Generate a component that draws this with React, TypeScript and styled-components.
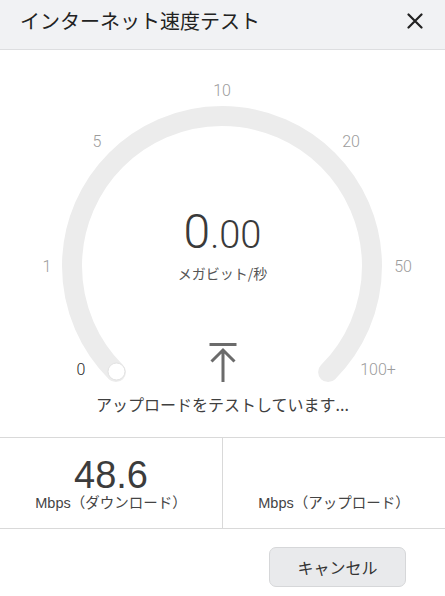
import styled, { createGlobalStyle } from "styled-components";

const GlobalStyle = createGlobalStyle`
  html, body {
    margin: 0;
    padding: 0;
    background: #ffffff;
  }
  body {
    font-family: "Liberation Sans", "Noto Sans CJK JP", sans-serif;
    color: #333333;
  }
`;

const Page = styled.div`
  width: 445px;
  height: 596px;
  display: flex;
  flex-direction: column;
  background: #ffffff;
  overflow: hidden;
`;

const Header = styled.header`
  height: 50px;
  box-sizing: border-box;
  display: flex;
  align-items: center;
  justify-content: space-between;
  padding: 0 20px 8px 20px;
  background: #f1f2f4;
  border-bottom: 1px solid #dddee0;
  flex-shrink: 0;
`;

const Title = styled.h1`
  margin: 0;
  font-family: "Noto Sans CJK JP", sans-serif;
  font-size: 20px;
  font-weight: 400;
  line-height: 24px;
  color: #222222;
`;

const CloseButton = styled.button`
  width: 24px;
  height: 24px;
  padding: 0;
  margin-right: -2px;
  border: none;
  background: none;
  display: flex;
  align-items: center;
  justify-content: center;
  cursor: pointer;
`;

const GaugeSection = styled.section`
  display: flex;
  flex-direction: column;
  align-items: center;
  padding-bottom: 23px;
`;

const Dial = styled.div`
  width: 445px;
  height: 340px;
  display: grid;

  & > * {
    grid-area: 1 / 1;
  }
`;

const DialLabel = styled.text<{ $dark?: boolean }>`
  font-family: Roboto, "Liberation Sans", sans-serif;
  font-weight: 300;
  font-size: 16px;
  fill: ${(p) => (p.$dark ? "#2a2a2a" : "#9c9c9c")};
`;

const Readout = styled.div`
  display: flex;
  flex-direction: column;
  align-items: center;
  padding-top: 158px;
`;

const Value = styled.div`
  display: flex;
  align-items: baseline;
  height: 48px;
  font-family: Roboto, "Liberation Sans", sans-serif;
  font-weight: 300;
  color: #3a3a3a;
  line-height: 48px;
`;

const ValueDigit = styled.span<{ $size: number }>`
  font-size: ${(p) => p.$size}px;
`;

const Unit = styled.div`
  margin-top: 8px;
  font-family: "Noto Sans CJK JP", sans-serif;
  font-size: 14px;
  line-height: 18px;
  color: #555555;
`;

const ArrowIcon = styled.svg`
  margin-top: 61px;
  display: block;
`;

const Status = styled.div`
  margin-top: 4px;
  font-family: "Noto Sans CJK JP", sans-serif;
  font-size: 16px;
  line-height: 20px;
  color: #404040;
`;

const Stats = styled.div`
  display: grid;
  grid-template-columns: 222px 1fr;
  border-top: 1px solid #d9d9d9;
  border-bottom: 1px solid #d9d9d9;
`;

const StatBox = styled.div<{ $divider?: boolean }>`
  height: 90px;
  box-sizing: border-box;
  display: flex;
  flex-direction: column;
  align-items: center;
  justify-content: flex-end;
  padding-bottom: 16px;
  border-left: ${(p) => (p.$divider ? "1px solid #d9d9d9" : "none")};
`;

const StatNumber = styled.div`
  font-family: "Liberation Sans", sans-serif;
  font-size: 38px;
  line-height: 38px;
  color: #3c3c3c;
`;

const StatLabel = styled.div`
  font-family: "Liberation Sans", "Noto Sans CJK JP", sans-serif;
  font-size: 14.5px;
  line-height: 18px;
  color: #444444;
`;

const Footer = styled.footer`
  display: flex;
  justify-content: flex-end;
  padding: 18px 39px 0 0;
`;

const CancelButton = styled.button`
  width: 137px;
  height: 40px;
  box-sizing: border-box;
  border: 1px solid #d6d7d9;
  border-radius: 7px;
  background: #e9eaec;
  font-family: "Noto Sans CJK JP", sans-serif;
  font-size: 16px;
  color: #333333;
  cursor: pointer;
`;

const labels = [
  { text: "10", x: 222, y: 91 },
  { text: "5", x: 97, y: 142 },
  { text: "20", x: 351, y: 142 },
  { text: "1", x: 47, y: 267 },
  { text: "50", x: 403, y: 267 },
  { text: "0", x: 81, y: 370, dark: true },
  { text: "100+", x: 378, y: 370 },
];

export default function App() {
  return (
    <Page>
      <GlobalStyle />
      <Header>
        <Title>インターネット速度テスト</Title>
        <CloseButton aria-label="閉じる">
          <svg width="16" height="16" viewBox="0 0 16 16">
            <path d="M1.5 1.5 L14.5 14.5 M14.5 1.5 L1.5 14.5" stroke="#222" strokeWidth="2.2" strokeLinecap="round" />
          </svg>
        </CloseButton>
      </Header>

      <GaugeSection>
        <Dial>
          <svg width="445" height="340" viewBox="0 51 445 340">
            <path
              d="M115.9 373.1 A150 150 0 1 1 328.1 373.1"
              fill="none"
              stroke="#ececec"
              strokeWidth="20"
              strokeLinecap="round"
            />
            <circle cx="116.5" cy="372.5" r="8.5" fill="#ffffff" stroke="#e2e2e2" strokeWidth="1" />
            {labels.map((l) => (
              <DialLabel
                key={l.text}
                x={l.x}
                y={l.y}
                textAnchor="middle"
                dominantBaseline="central"
                $dark={l.dark}
              >
                {l.text}
              </DialLabel>
            ))}
          </svg>
          <Readout>
            <Value>
              <ValueDigit $size={48}>0</ValueDigit>
              <ValueDigit $size={38}>.00</ValueDigit>
            </Value>
            <Unit>メガビット/秒</Unit>
            <ArrowIcon width="30" height="40" viewBox="0 0 30 40">
              <path d="M1.5 1.5 H28.5" stroke="#6b6b6b" strokeWidth="3" />
              <path d="M15 7 V39 M3.5 18.5 L15 7 L26.5 18.5" stroke="#6b6b6b" strokeWidth="3" fill="none" />
            </ArrowIcon>
          </Readout>
        </Dial>
        <Status>アップロードをテストしています...</Status>
      </GaugeSection>

      <Stats>
        <StatBox>
          <StatNumber>48.6</StatNumber>
          <StatLabel>Mbps（ダウンロード）</StatLabel>
        </StatBox>
        <StatBox $divider>
          <StatLabel>Mbps（アップロード）</StatLabel>
        </StatBox>
      </Stats>

      <Footer>
        <CancelButton>キャンセル</CancelButton>
      </Footer>
    </Page>
  );
}
